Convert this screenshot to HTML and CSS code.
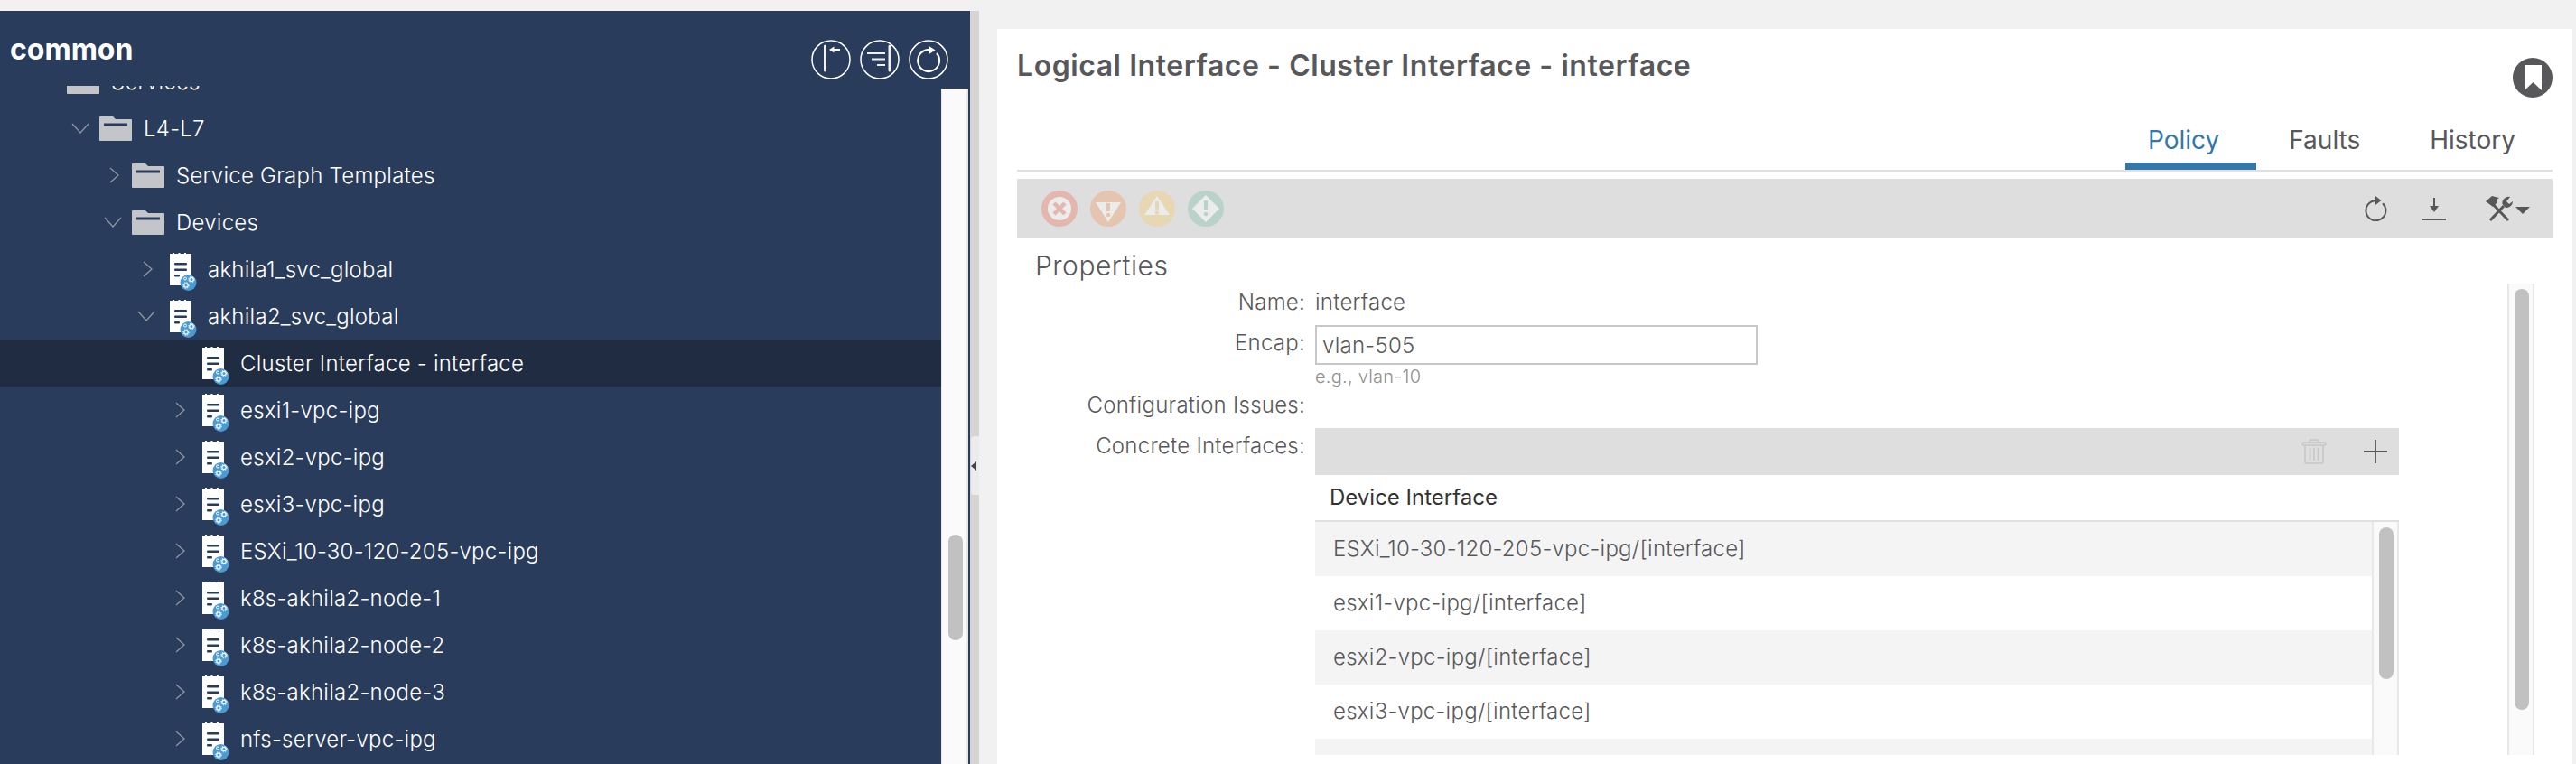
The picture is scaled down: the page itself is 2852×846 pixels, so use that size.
FILE: index.html
```html
<!DOCTYPE html>
<html lang="en">
<head>
  <meta charset="UTF-8" />
  <title>Logical Interface - Cluster Interface - interface</title>
  <link rel="stylesheet" href="styles.css">
</head>
<body>
  <svg class="defs" width="0" height="0">
    <symbol id="folder" viewBox="0 0 36 27">
      <path d="M1 0H15L18 3H35Q36 3 36 4V26Q36 27 35 27H1Q0 27 0 26V1Q0 0 1 0Z" fill="#c4c5c9"/>
      <rect x="5" y="7.5" width="26" height="3" fill="#2a3c5c"/>
    </symbol>
    <symbol id="device" viewBox="0 0 30 42">
      <path d="M0 1H3V0H5V1H9.5V0H11.5V1H16V0H18V1H24V36H0Z" fill="#fff"/>
      <rect x="5" y="11" width="14" height="2.6" rx="1" fill="#2a3c5c"/>
      <rect x="5" y="17.5" width="14" height="2.6" rx="1" fill="#2a3c5c"/>
      <rect x="5" y="24" width="6" height="2.6" rx="1" fill="#2a3c5c"/>
      <circle cx="20.5" cy="33" r="9" fill="#4a9ad4"/>
      <circle cx="24" cy="29.5" r="2.2" fill="none" stroke="#fff" stroke-width="1.2"/>
      <circle cx="24" cy="29.5" r="3.3" fill="none" stroke="#fff" stroke-width="1" stroke-dasharray="1.2 1.4"/>
      <circle cx="18" cy="36" r="2.2" fill="none" stroke="#fff" stroke-width="1.2"/>
      <circle cx="18" cy="36" r="3.3" fill="none" stroke="#fff" stroke-width="1" stroke-dasharray="1.2 1.4"/>
      <circle cx="17" cy="28.5" r="1.5" fill="none" stroke="#fff" stroke-width="1"/>
    </symbol>
    <symbol id="open" viewBox="0 0 20 12">
      <path d="M1 1L10 11L19 1" fill="none" stroke="#8f96a3" stroke-width="1.3"/>
    </symbol>
    <symbol id="closed" viewBox="0 0 11 18">
      <path d="M1 1L10 9L1 17" fill="none" stroke="#8f96a3" stroke-width="1.3"/>
    </symbol>
    <symbol id="refresh" viewBox="0 0 26 28">
      <path d="M14 5.2A11 11 0 1 0 21 8.2" fill="none" stroke="#58585b" stroke-width="2"/>
      <path d="M13 0L19.5 5L13 10Z" fill="#58585b"/>
    </symbol>
  </svg>

  <div class="app">
    <aside class="nav">
      <header class="nav-head">
        <span class="nav-title">common</span>
        <div class="nav-tools">
          <svg class="round-btn" viewBox="0 0 44 44">
            <circle cx="22" cy="22" r="21" fill="none" stroke="#fff" stroke-width="1.5"/>
            <path d="M15.5 7V34" stroke="#f1f1f1" stroke-width="3" stroke-linecap="round"/>
            <path d="M24 11H32" stroke="#fff" stroke-width="2"/>
            <path d="M20 11L25.5 7.5V14.5Z" fill="#fff"/>
          </svg>
          <svg class="round-btn" viewBox="0 0 44 44">
            <circle cx="22" cy="22" r="21" fill="none" stroke="#fff" stroke-width="1.5"/>
            <path d="M8 15H28M13 21.5H28M19 28H28" stroke="#f1f1f1" stroke-width="2"/>
            <path d="M33 7V34" stroke="#f1f1f1" stroke-width="3" stroke-linecap="round"/>
          </svg>
          <svg class="round-btn" viewBox="0 0 44 44">
            <circle cx="22" cy="22" r="21" fill="none" stroke="#fff" stroke-width="1.5"/>
            <path d="M24 11.2A12 12 0 1 0 31 15" fill="none" stroke="#fff" stroke-width="2"/>
            <path d="M22.5 7L29.5 11.5L22.5 16Z" fill="#fff"/>
          </svg>
        </div>
      </header>
      <div class="nav-body">
        <ul class="tree">
          <li class="row lvl-1"><span class="caret"></span><svg class="ico-folder"><use href="#folder"/></svg><span class="label">Services</span></li>
          <li class="row lvl-2"><span class="caret"><svg class="chev-open"><use href="#open"/></svg></span><svg class="ico-folder"><use href="#folder"/></svg><span class="label">L4-L7</span></li>
          <li class="row lvl-3"><span class="caret"><svg class="chev-closed"><use href="#closed"/></svg></span><svg class="ico-folder"><use href="#folder"/></svg><span class="label">Service Graph Templates</span></li>
          <li class="row lvl-3"><span class="caret"><svg class="chev-open"><use href="#open"/></svg></span><svg class="ico-folder"><use href="#folder"/></svg><span class="label">Devices</span></li>
          <li class="row lvl-4"><span class="caret"><svg class="chev-closed"><use href="#closed"/></svg></span><svg class="ico-device"><use href="#device"/></svg><span class="label doc">akhila1_svc_global</span></li>
          <li class="row lvl-4"><span class="caret"><svg class="chev-open"><use href="#open"/></svg></span><svg class="ico-device"><use href="#device"/></svg><span class="label doc">akhila2_svc_global</span></li>
          <li class="row lvl-5 selected"><span class="caret"></span><svg class="ico-device"><use href="#device"/></svg><span class="label doc">Cluster Interface - interface</span></li>
          <li class="row lvl-5"><span class="caret"><svg class="chev-closed"><use href="#closed"/></svg></span><svg class="ico-device"><use href="#device"/></svg><span class="label doc">esxi1-vpc-ipg</span></li>
          <li class="row lvl-5"><span class="caret"><svg class="chev-closed"><use href="#closed"/></svg></span><svg class="ico-device"><use href="#device"/></svg><span class="label doc">esxi2-vpc-ipg</span></li>
          <li class="row lvl-5"><span class="caret"><svg class="chev-closed"><use href="#closed"/></svg></span><svg class="ico-device"><use href="#device"/></svg><span class="label doc">esxi3-vpc-ipg</span></li>
          <li class="row lvl-5"><span class="caret"><svg class="chev-closed"><use href="#closed"/></svg></span><svg class="ico-device"><use href="#device"/></svg><span class="label doc">ESXi_10-30-120-205-vpc-ipg</span></li>
          <li class="row lvl-5"><span class="caret"><svg class="chev-closed"><use href="#closed"/></svg></span><svg class="ico-device"><use href="#device"/></svg><span class="label doc">k8s-akhila2-node-1</span></li>
          <li class="row lvl-5"><span class="caret"><svg class="chev-closed"><use href="#closed"/></svg></span><svg class="ico-device"><use href="#device"/></svg><span class="label doc">k8s-akhila2-node-2</span></li>
          <li class="row lvl-5"><span class="caret"><svg class="chev-closed"><use href="#closed"/></svg></span><svg class="ico-device"><use href="#device"/></svg><span class="label doc">k8s-akhila2-node-3</span></li>
          <li class="row lvl-5"><span class="caret"><svg class="chev-closed"><use href="#closed"/></svg></span><svg class="ico-device"><use href="#device"/></svg><span class="label doc">nfs-server-vpc-ipg</span></li>
        </ul>
        <div class="track tree-track"><div class="thumb"></div></div>
      </div>
    </aside>

    <div class="splitter">
      <div class="handle"><span class="handle-arrow"></span></div>
    </div>

    <main class="detail">
      <div class="detail-head">
        <h1 class="detail-title">Logical Interface - Cluster Interface - interface</h1>
        <svg class="bookmark" viewBox="0 0 44 44">
          <circle cx="22" cy="22" r="22" fill="#58585b"/>
          <path d="M13 8H32V36L22.5 27L13 36Z" fill="#fff"/>
        </svg>
      </div>

      <nav class="tabs">
        <a class="tab active">Policy</a>
        <a class="tab">Faults</a>
        <a class="tab">History</a>
      </nav>

      <div class="toolbar">
        <div class="faults">
          <svg class="fault" viewBox="0 0 40 40">
            <circle cx="20" cy="20" r="20" fill="#e3b6ae"/>
            <circle cx="20" cy="20" r="13" fill="#ececec"/>
            <path d="M14 14L26 26M26 14L14 26" stroke="#e3b6ae" stroke-width="4.5"/>
          </svg>
          <svg class="fault" viewBox="0 0 40 40">
            <circle cx="20" cy="20" r="20" fill="#e6c5b0"/>
            <path d="M6 13H34L20 35Z" fill="#ececec"/>
            <path d="M18 14H22V23H18Z" fill="#e6c5b0"/>
            <circle cx="20" cy="27" r="2.3" fill="#e6c5b0"/>
          </svg>
          <svg class="fault" viewBox="0 0 40 40">
            <circle cx="20" cy="20" r="20" fill="#e7d7b3"/>
            <path d="M20 6L34 27H6Z" fill="#ececec"/>
            <path d="M18 12H22V21H18Z" fill="#e7d7b3"/>
            <circle cx="20" cy="24.5" r="2.3" fill="#e7d7b3"/>
          </svg>
          <svg class="fault" viewBox="0 0 40 40">
            <circle cx="20" cy="20" r="20" fill="#b9d3cb"/>
            <path d="M20 5L35 20L20 35L5 20Z" fill="#ececec"/>
            <path d="M18 11H22V21H18Z" fill="#b9d3cb"/>
            <circle cx="20" cy="26" r="2.3" fill="#b9d3cb"/>
          </svg>
        </div>
        <div class="actions">
          <svg class="act-refresh"><use href="#refresh"/></svg>
          <svg class="act-download" viewBox="0 0 26 26">
            <path d="M13 1V12" stroke="#58585b" stroke-width="2"/>
            <path d="M8 10H18L13 17Z" fill="#58585b"/>
            <path d="M0 25H26" stroke="#58585b" stroke-width="2"/>
          </svg>
          <svg class="act-tools" viewBox="0 0 30 28">
            <path d="M6 7L25 27" stroke="#58585b" stroke-width="3"/>
            <path d="M0 6L7 0L15 2L12 4L13 7L8 12Z" fill="#58585b"/>
            <path d="M5 27L20 11" stroke="#58585b" stroke-width="3"/>
            <path d="M27 1A7 7 0 0 0 18.500 9L22 13A7 7 0 0 0 30 6L26 9L23 6Z" fill="#58585b"/>
          </svg>
          <span class="act-caret"></span>
        </div>
      </div>

      <div class="detail-body">
        <section class="props">
          <h2 class="props-title">Properties</h2>
          <div class="form">
            <div class="f-label f-name">Name:</div>
            <div class="f-value f-name">interface</div>

            <div class="f-label f-encap">Encap:</div>
            <div class="f-value">
              <input class="text-input" type="text" value="vlan-505">
              <div class="hint">e.g., vlan-10</div>
            </div>

            <div class="f-label f-issues">Configuration Issues:</div>
            <div></div>

            <div class="f-label f-concrete">Concrete Interfaces:</div>
            <div class="f-table">
              <div class="table-bar">
                <svg class="trash" viewBox="0 0 28 28">
                  <path d="M9 4V2Q9 1 10 1H18Q19 1 19 2V4" fill="none" stroke="#c6c6c6" stroke-width="1.5"/>
                  <rect x="1" y="4" width="26" height="3" rx="1.500" fill="none" stroke="#c6c6c6" stroke-width="1.500"/>
                  <path d="M4 7V26Q4 27 5 27H23Q24 27 24 26V7" fill="none" stroke="#c6c6c6" stroke-width="1.500"/>
                  <path d="M9.500 10V24M14 10V24M18.500 10V24" stroke="#c6c6c6" stroke-width="1.500"/>
                </svg>
                <svg class="plus" viewBox="0 0 26 26">
                  <path d="M13 0V26M0 13H26" stroke="#58585b" stroke-width="1.800"/>
                </svg>
              </div>
              <div class="table-head">Device Interface</div>
              <div class="table-body">
                <ul class="table-rows">
                  <li>ESXi_10-30-120-205-vpc-ipg/[interface]</li>
                  <li>esxi1-vpc-ipg/[interface]</li>
                  <li>esxi2-vpc-ipg/[interface]</li>
                  <li>esxi3-vpc-ipg/[interface]</li>
                  <li></li>
                </ul>
                <div class="track table-track"><div class="thumb"></div></div>
              </div>
            </div>
          </div>
        </section>
        <div class="track main-track"><div class="thumb"></div></div>
      </div>
    </main>
  </div>
</body>
</html>
```

FILE: styles.css
```css
* {
  box-sizing: border-box;
}
html, body {
  margin: 0;
  height: 846px;
  overflow: hidden;
}
body {
  background: #f1f1f1;
  font-family: Inter, "Liberation Sans", sans-serif;
  padding-top: 12px;
}
ul {
  list-style: none;
  margin: 0;
  padding: 0;
}
.defs {
  display: block;
  height: 0;
}
.app {
  display: flex;
  height: 834px;
}

/* left tree */
.nav {
  width: 1074px;
  background: #2a3c5c;
  padding-right: 2px;
  display: flex;
  flex-direction: column;
}
.nav-head {
  height: 83px;
  flex: none;
  display: flex;
  justify-content: space-between;
  padding: 32px 22px 0 11px;
}
.nav-title {
  color: #fff;
  font-size: 32px;
  font-weight: 700;
  line-height: 22px;
}
.nav-tools {
  display: flex;
  gap: 10px;
}
.round-btn {
  width: 44px;
  height: 44px;
}
.nav-body {
  flex: 1;
  display: flex;
  min-height: 0;
}
.tree {
  flex: 1;
  overflow: hidden;
}
.row {
  height: 52px;
  display: flex;
  align-items: center;
  color: #fff;
  font-size: 24px;
  font-weight: 300;
  letter-spacing: .25px;
  white-space: nowrap;
}
.row:first-child {
  margin-top: -31px;
}
.selected {
  background: #1f2c42;
}
.lvl-1 { padding-left: 38px; }
.lvl-2 { padding-left: 74px; }
.lvl-3 { padding-left: 110px; }
.lvl-4 { padding-left: 147px; }
.lvl-5 { padding-left: 183px; }
.caret {
  width: 36px;
  flex: none;
  display: flex;
  align-items: center;
}
.chev-open {
  width: 20px;
  height: 12px;
  margin-left: 5px;
}
.chev-closed {
  width: 11px;
  height: 18px;
  margin-left: 11px;
}
.ico-folder {
  width: 36px;
  height: 27px;
  flex: none;
}
.ico-device {
  width: 30px;
  height: 42px;
  flex: none;
  margin-left: 5px;
  margin-top: 6px;
}
.label {
  margin-left: 13px;
}
.label.doc {
  margin-left: 12px;
}

/* scrollbars */
.track {
  width: 30px;
  flex: none;
  background: #fafafa;
  border-left: 2px solid #e8e8e8;
  border-right: 2px solid #e8e8e8;
  padding-left: 6px;
}
.thumb {
  width: 16px;
  background: #c1c1c1;
  border-radius: 8px;
}
.tree-track {
  margin-top: 3px;
  border-left-width: 1px;
  padding-left: 7px;
}
.tree-track .thumb {
  height: 117px;
  margin-top: 494px;
}
.table-track .thumb {
  height: 168px;
  margin-top: 6px;
}
.main-track {
  margin-top: 50px;
}
.main-track .thumb {
  height: 466px;
  margin-top: 6px;
}

/* splitter */
.splitter {
  width: 10px;
  flex: none;
  background: #d6d5d3;
  padding: 471px 0 0 1px;
}
.handle {
  width: 9px;
  height: 65px;
  background: #ececec;
  border-radius: 4px 0 0 4px;
  display: flex;
  align-items: center;
}
.handle-arrow {
  width: 0;
  height: 0;
  border-top: 5px solid transparent;
  border-bottom: 5px solid transparent;
  border-right: 6px solid #444;
}

/* right panel */
.detail {
  flex: 1;
  min-width: 0;
  margin: 20px 4px 0 20px;
  background: #fff;
  padding: 0 22px;
  display: flex;
  flex-direction: column;
}
.detail-head {
  height: 98px;
  flex: none;
  display: flex;
  justify-content: space-between;
}
.detail-title {
  margin: 21px 0 0;
  font-size: 32px;
  line-height: 40px;
  font-weight: 600;
  letter-spacing: .55px;
  color: #58585b;
}
.bookmark {
  width: 44px;
  height: 44px;
  margin-top: 32px;
}
.tabs {
  flex: none;
  display: flex;
  justify-content: flex-end;
  border-bottom: 2px solid #e0e0e0;
}
.tab {
  padding: 0 41px 0 25px;
  height: 58px;
  line-height: 50px;
  font-size: 28px;
  font-weight: 400;
  color: #58585b;
  border-bottom: 8px solid transparent;
}
.tab + .tab {
  margin-left: 11px;
}
.tab.active {
  color: #3477a8;
  border-bottom-color: #3477a8;
}
.toolbar {
  flex: none;
  height: 66px;
  margin-top: 8px;
  background: #dedede;
  padding: 0 25px 0 27px;
  display: flex;
  justify-content: space-between;
  align-items: center;
}
.faults {
  display: flex;
  gap: 14px;
}
.fault {
  width: 40px;
  height: 40px;
}
.actions {
  display: flex;
  align-items: center;
}
.act-refresh {
  width: 26px;
  height: 28px;
}
.act-download {
  width: 26px;
  height: 26px;
  margin-left: 39px;
}
.act-tools {
  width: 30px;
  height: 28px;
  margin-left: 44px;
}
.act-caret {
  width: 0;
  height: 0;
  margin-left: 3px;
  margin-top: 4px;
  border-left: 8px solid transparent;
  border-right: 8px solid transparent;
  border-top: 8px solid #58585b;
}
.detail-body {
  height: 572px;
  flex: none;
  display: flex;
  padding-right: 20px;
  overflow: hidden;
}
.props {
  flex: 1;
  min-width: 0;
}
.props-title {
  margin: 10px 0 0 20px;
  font-size: 30px;
  line-height: 40px;
  font-weight: 300;
  letter-spacing: .5px;
  color: #58585b;
}
.form {
  display: grid;
  grid-template-columns: 319px 1200px;
  column-gap: 11px;
  font-size: 24px;
  font-weight: 300;
  letter-spacing: .25px;
  color: #58585b;
}
.f-label {
  text-align: right;
  line-height: 40px;
}
.f-name {
  line-height: 42px;
}
.f-encap {
  margin-top: 4px;
}
.f-issues {
  height: 40px;
}
.f-concrete {
  margin-top: 5px;
}
.text-input {
  display: block;
  width: 490px;
  height: 44px;
  margin-top: 4px;
  padding: 0 6px;
  border: 2px solid #c8c8cc;
  font: inherit;
  letter-spacing: inherit;
  color: #58585b;
  outline: none;
}
.hint {
  font-size: 20px;
  line-height: 24px;
  margin-top: 1px;
  color: #8f8f8f;
}
.f-table {
  margin-top: 5px;
}
.table-bar {
  height: 52px;
  background: #dedede;
  display: flex;
  justify-content: flex-end;
  align-items: center;
  padding-right: 13px;
}
.trash {
  width: 28px;
  height: 28px;
}
.plus {
  width: 26px;
  height: 26px;
  margin-left: 41px;
}
.table-head {
  height: 52px;
  line-height: 50px;
  padding-left: 16px;
  font-weight: 400;
  letter-spacing: 0;
  color: #333;
  border-bottom: 2px solid #e0e0e0;
}
.table-body {
  height: 258px;
  display: flex;
  overflow: hidden;
}
.table-rows {
  flex: 1;
  min-width: 0;
}
.table-rows li {
  height: 60px;
  line-height: 60px;
  padding-left: 20px;
}
.table-rows li:nth-child(odd) {
  background: #f4f4f4;
}
```
